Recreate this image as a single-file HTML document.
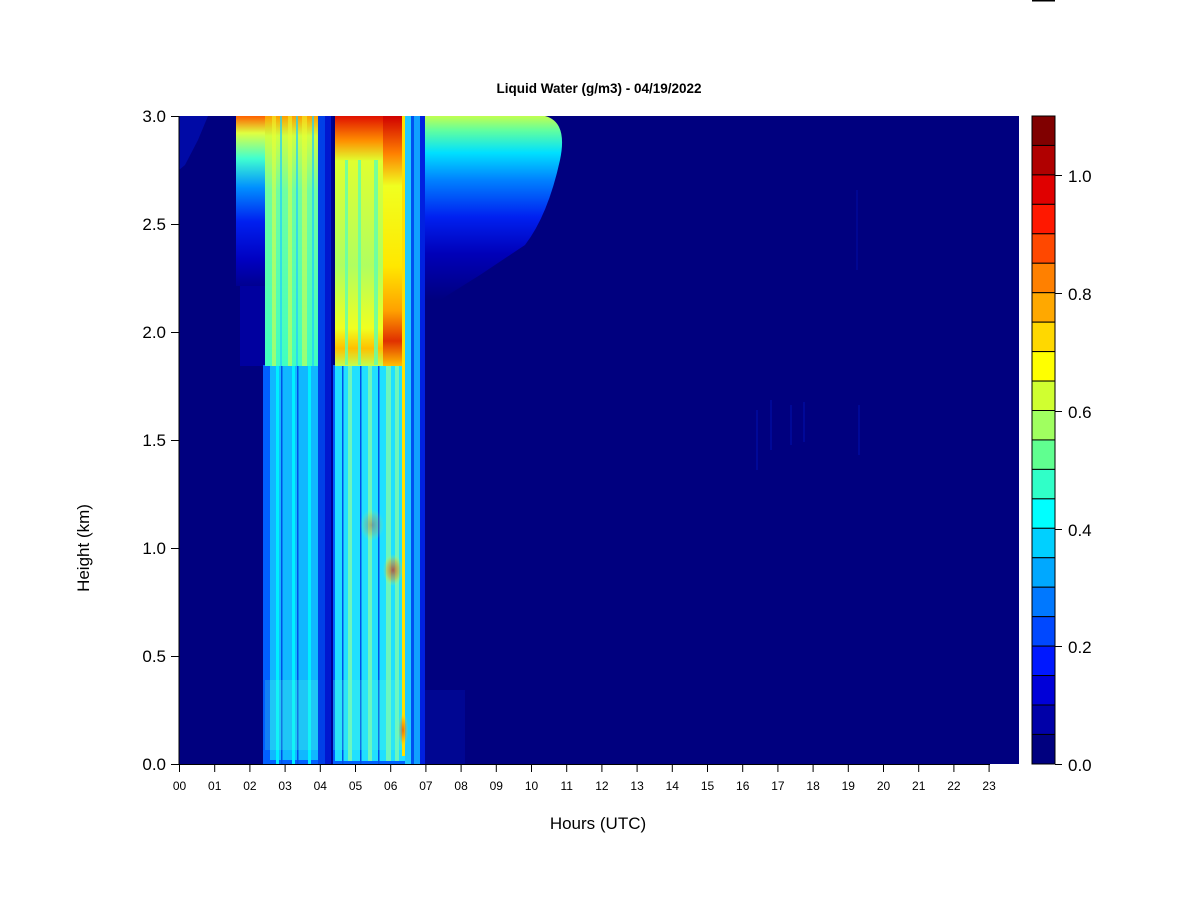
<!DOCTYPE html>
<html><head><meta charset="utf-8"><style>
html,body{margin:0;padding:0;background:#fff;}
svg{display:block;font-family:"Liberation Sans",Arial,sans-serif;}
</style></head><body>
<svg width="1200" height="900" viewBox="0 0 1200 900" xmlns="http://www.w3.org/2000/svg">
<defs>
<linearGradient id="gA" x1="0" y1="0" x2="0" y2="1">
<stop offset="0" stop-color="#ff6000"/><stop offset="0.1" stop-color="#e0ff40"/><stop offset="0.25" stop-color="#40ffd0"/><stop offset="0.42" stop-color="#0090ff"/><stop offset="0.62" stop-color="#0020f0"/><stop offset="0.85" stop-color="#0000c0"/><stop offset="1" stop-color="#000090"/>
</linearGradient>
<linearGradient id="gR" x1="0" y1="0" x2="0" y2="1">
<stop offset="0" stop-color="#c0ff50"/><stop offset="0.08" stop-color="#60ffa0"/><stop offset="0.2" stop-color="#00e0ff"/><stop offset="0.35" stop-color="#0080ff"/><stop offset="0.55" stop-color="#0020f0"/><stop offset="0.75" stop-color="#0000b8"/><stop offset="1" stop-color="#00007f"/>
</linearGradient>
<linearGradient id="gUpL" x1="0" y1="0" x2="0" y2="1">
<stop offset="0" stop-color="#ffa000"/><stop offset="0.08" stop-color="#d0ff40"/><stop offset="0.3" stop-color="#70ffa0"/><stop offset="1" stop-color="#40ffc0"/>
</linearGradient>
<linearGradient id="gUpM" x1="0" y1="0" x2="0" y2="1">
<stop offset="0" stop-color="#e01000"/><stop offset="0.1" stop-color="#ff9000"/><stop offset="0.18" stop-color="#e0ff30"/><stop offset="0.6" stop-color="#b0ff60"/><stop offset="0.85" stop-color="#f0ff20"/><stop offset="0.93" stop-color="#ffc000"/><stop offset="1" stop-color="#c0ff50"/>
</linearGradient>
<linearGradient id="gUpR" x1="0" y1="0" x2="0" y2="1">
<stop offset="0" stop-color="#d00000"/><stop offset="0.15" stop-color="#ff8000"/><stop offset="0.28" stop-color="#f0ff20"/><stop offset="0.6" stop-color="#ffe800"/><stop offset="0.78" stop-color="#ffa000"/><stop offset="0.9" stop-color="#e03000"/><stop offset="1" stop-color="#ffc000"/>
</linearGradient>
<radialGradient id="gSpot"><stop offset="0" stop-color="#e02000"/><stop offset="0.6" stop-color="#ff9000" stop-opacity="0.6"/><stop offset="1" stop-color="#ffff00" stop-opacity="0"/></radialGradient>
</defs>
<rect x="1032" y="0" width="23" height="1.5" fill="#000"/>
<text x="599" y="93" font-size="13.5" font-weight="bold" text-anchor="middle">Liquid Water (g/m3) - 04/19/2022</text>
<rect x="179" y="116" width="840" height="648" fill="#00007f"/>
<path d="M179 116 L208 116 L198 140 L185 165 L179 170Z" fill="#0010c0" opacity="0.6"/>
<path d="M425 116 L545 116 Q568 122 560 160 Q548 215 525 245 L480 275 L440 300 L425 300Z" fill="url(#gR)"/>
<rect x="236" y="116" width="30" height="170" fill="url(#gA)"/>
<rect x="240" y="286" width="25" height="80" fill="#0000a8" opacity="0.8"/>
<rect x="263" y="365" width="162" height="399" fill="#0060ff"/>
<rect x="270" y="365" width="48" height="395" fill="#10b8ff"/>
<rect x="335" y="365" width="70" height="396" fill="#20e0ff"/>
<g fill="#00f0ff">
<rect x="276" y="365" width="3" height="399"/><rect x="292" y="365" width="3" height="399"/><rect x="308" y="365" width="3" height="399"/>
</g>
<g fill="#90ffa0" opacity="0.7">
<rect x="348" y="365" width="4" height="396"/><rect x="368" y="365" width="4" height="396"/><rect x="386" y="365" width="5" height="396"/><rect x="395" y="365" width="4" height="396"/>
</g>
<g fill="#0050e8">
<rect x="281" y="365" width="1.5" height="399"/><rect x="297" y="365" width="1.5" height="399"/><rect x="342" y="365" width="1.5" height="399"/><rect x="360" y="365" width="1.5" height="399"/><rect x="378" y="365" width="1.5" height="399"/>
</g>
<rect x="265" y="680" width="150" height="70" fill="#60ffd0" opacity="0.2"/>
<rect x="265" y="116" width="55" height="250" fill="url(#gUpL)"/>
<g fill="#f0ff30" opacity="0.5">
<rect x="272" y="116" width="4" height="250"/><rect x="288" y="116" width="4" height="250"/><rect x="302" y="116" width="5" height="250"/>
</g>
<g fill="#20d0ff" opacity="0.7">
<rect x="280" y="116" width="2" height="250"/><rect x="296" y="116" width="2" height="250"/><rect x="312" y="116" width="2" height="250"/>
</g>
<rect x="335" y="116" width="48" height="250" fill="url(#gUpM)"/>
<rect x="383" y="116" width="20" height="250" fill="url(#gUpR)"/>
<g fill="#60ffb0" opacity="0.8"><rect x="374" y="160" width="4" height="205"/><rect x="345" y="160" width="3" height="205"/><rect x="358" y="160" width="3" height="205"/></g>
<rect x="318" y="116" width="7" height="648" fill="#0040e8"/>
<rect x="325" y="116" width="6" height="648" fill="#0018d0"/>
<rect x="331" y="116" width="2" height="648" fill="#000090"/>
<rect x="402" y="116" width="3" height="640" fill="#ffe000"/>
<rect x="405" y="116" width="6" height="648" fill="#20c8ff"/>
<rect x="411" y="116" width="3" height="648" fill="#0050f0"/>
<rect x="414" y="116" width="6" height="648" fill="#10a0ff"/>
<rect x="420" y="116" width="5" height="648" fill="#0020e0"/>
<ellipse cx="372" cy="525" rx="12" ry="16" fill="url(#gSpot)" opacity="0.35"/>
<ellipse cx="393" cy="570" rx="10" ry="16" fill="url(#gSpot)" opacity="0.7"/>
<ellipse cx="403" cy="730" rx="5" ry="18" fill="url(#gSpot)" opacity="0.6"/>
<rect x="425" y="690" width="40" height="74" fill="#0010b0" opacity="0.4"/>
<g fill="#0010b0" opacity="0.5"><rect x="756" y="410" width="2" height="60"/><rect x="770" y="400" width="2" height="50"/><rect x="790" y="405" width="2" height="40"/><rect x="803" y="402" width="2" height="40"/><rect x="858" y="405" width="2" height="50"/></g>
<rect x="856" y="190" width="2" height="80" fill="#0010b0" opacity="0.4"/>
<g stroke="#000" stroke-width="1">
<line x1="179" y1="116" x2="179" y2="764"/>
<line x1="171" y1="116.5" x2="179" y2="116.5"/><line x1="171" y1="224.5" x2="179" y2="224.5"/><line x1="171" y1="332.5" x2="179" y2="332.5"/><line x1="171" y1="440.5" x2="179" y2="440.5"/><line x1="171" y1="548.5" x2="179" y2="548.5"/><line x1="171" y1="656.5" x2="179" y2="656.5"/><line x1="171" y1="764.5" x2="179" y2="764.5"/>
<line x1="179" y1="764.5" x2="990" y2="764.5"/>
</g>
<g font-size="17" text-anchor="end">
<text x="166" y="122">3.0</text><text x="166" y="230">2.5</text><text x="166" y="338">2.0</text><text x="166" y="446">1.5</text><text x="166" y="554">1.0</text><text x="166" y="662">0.5</text><text x="166" y="770">0.0</text>
</g>
<g stroke="#000">
<line x1="179.5" y1="764" x2="179.5" y2="772"/><line x1="214.7" y1="764" x2="214.7" y2="772"/><line x1="249.9" y1="764" x2="249.9" y2="772"/><line x1="285.1" y1="764" x2="285.1" y2="772"/><line x1="320.3" y1="764" x2="320.3" y2="772"/><line x1="355.5" y1="764" x2="355.5" y2="772"/><line x1="390.7" y1="764" x2="390.7" y2="772"/><line x1="425.9" y1="764" x2="425.9" y2="772"/><line x1="461.1" y1="764" x2="461.1" y2="772"/><line x1="496.3" y1="764" x2="496.3" y2="772"/><line x1="531.5" y1="764" x2="531.5" y2="772"/><line x1="566.7" y1="764" x2="566.7" y2="772"/><line x1="601.9" y1="764" x2="601.9" y2="772"/><line x1="637.1" y1="764" x2="637.1" y2="772"/><line x1="672.3" y1="764" x2="672.3" y2="772"/><line x1="707.5" y1="764" x2="707.5" y2="772"/><line x1="742.7" y1="764" x2="742.7" y2="772"/><line x1="777.9" y1="764" x2="777.9" y2="772"/><line x1="813.1" y1="764" x2="813.1" y2="772"/><line x1="848.3" y1="764" x2="848.3" y2="772"/><line x1="883.5" y1="764" x2="883.5" y2="772"/><line x1="918.7" y1="764" x2="918.7" y2="772"/><line x1="953.9" y1="764" x2="953.9" y2="772"/><line x1="989.1" y1="764" x2="989.1" y2="772"/>
</g>
<g font-size="12" text-anchor="middle">
<text x="179.5" y="790">00</text><text x="214.7" y="790">01</text><text x="249.9" y="790">02</text><text x="285.1" y="790">03</text><text x="320.3" y="790">04</text><text x="355.5" y="790">05</text><text x="390.7" y="790">06</text><text x="425.9" y="790">07</text><text x="461.1" y="790">08</text><text x="496.3" y="790">09</text><text x="531.5" y="790">10</text><text x="566.7" y="790">11</text><text x="601.9" y="790">12</text><text x="637.1" y="790">13</text><text x="672.3" y="790">14</text><text x="707.5" y="790">15</text><text x="742.7" y="790">16</text><text x="777.9" y="790">17</text><text x="813.1" y="790">18</text><text x="848.3" y="790">19</text><text x="883.5" y="790">20</text><text x="918.7" y="790">21</text><text x="953.9" y="790">22</text><text x="989.1" y="790">23</text>
</g>
<text x="598" y="829" font-size="17" text-anchor="middle">Hours (UTC)</text>
<text transform="translate(89,548) rotate(-90)" font-size="17" text-anchor="middle">Height (km)</text>
<g stroke="#000" stroke-width="1">
<rect x="1032" y="116" width="23" height="29.45" fill="#800000"/>
<rect x="1032" y="145.45" width="23" height="29.45" fill="#b00000"/>
<rect x="1032" y="174.9" width="23" height="29.45" fill="#e00000"/>
<rect x="1032" y="204.35" width="23" height="29.45" fill="#ff1800"/>
<rect x="1032" y="233.8" width="23" height="29.45" fill="#ff4800"/>
<rect x="1032" y="263.25" width="23" height="29.45" fill="#ff8000"/>
<rect x="1032" y="292.7" width="23" height="29.45" fill="#ffa800"/>
<rect x="1032" y="322.15" width="23" height="29.45" fill="#ffd800"/>
<rect x="1032" y="351.6" width="23" height="29.45" fill="#ffff00"/>
<rect x="1032" y="381.05" width="23" height="29.45" fill="#d0ff30"/>
<rect x="1032" y="410.5" width="23" height="29.45" fill="#a0ff60"/>
<rect x="1032" y="439.95" width="23" height="29.45" fill="#60ff90"/>
<rect x="1032" y="469.4" width="23" height="29.45" fill="#30ffc8"/>
<rect x="1032" y="498.85" width="23" height="29.45" fill="#00ffff"/>
<rect x="1032" y="528.3" width="23" height="29.45" fill="#00d0ff"/>
<rect x="1032" y="557.75" width="23" height="29.45" fill="#00a8ff"/>
<rect x="1032" y="587.2" width="23" height="29.45" fill="#0078ff"/>
<rect x="1032" y="616.65" width="23" height="29.45" fill="#0048ff"/>
<rect x="1032" y="646.1" width="23" height="29.45" fill="#0018ff"/>
<rect x="1032" y="675.55" width="23" height="29.45" fill="#0000d8"/>
<rect x="1032" y="705" width="23" height="29.45" fill="#0000a8"/>
<rect x="1032" y="734.45" width="23" height="29.55" fill="#00007f"/>
<line x1="1055" y1="175.5" x2="1062" y2="175.5"/><line x1="1055" y1="293.5" x2="1062" y2="293.5"/><line x1="1055" y1="411.5" x2="1062" y2="411.5"/><line x1="1055" y1="529.5" x2="1062" y2="529.5"/><line x1="1055" y1="646.5" x2="1062" y2="646.5"/><line x1="1055" y1="764.5" x2="1062" y2="764.5"/>
</g>
<g font-size="17">
<text x="1068" y="182">1.0</text><text x="1068" y="300">0.8</text><text x="1068" y="418">0.6</text><text x="1068" y="536">0.4</text><text x="1068" y="653">0.2</text><text x="1068" y="771">0.0</text>
</g>
</svg>
</body></html>
